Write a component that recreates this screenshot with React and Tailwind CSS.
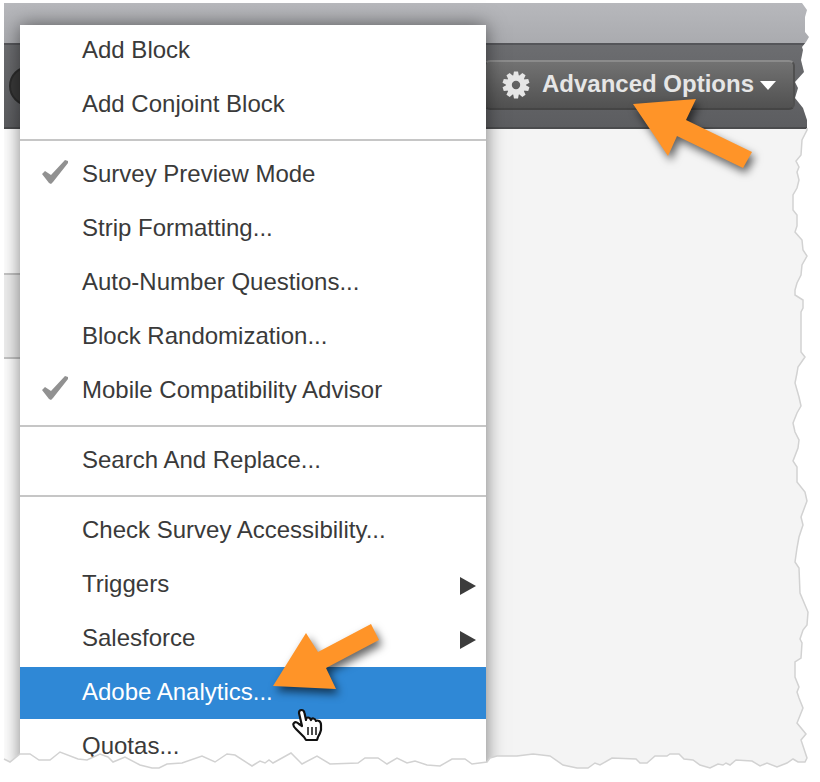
import React from "react";

const TEAR_RIGHT =
  "L807 128 L807 130 L802 140 L801 155 L796 161 L799 167 L797 172 L799 180 L797 188 L793 195 L793 210 L797 215 L797 226 L795 232 L802 240 L803 250 L807 256 L802 265 L801 275 L797 283 L795 290 L795 295 L803 300 L803 308 L801 312 L801 352 L805 357 L798 367 L797 373 L795 383 L799 397 L801 406 L797 413 L793 423 L795 432 L799 440 L798 448 L793 461 L797 467 L797 482 L805 492 L807 501 L801 517 L803 525 L799 537 L797 548 L795 562 L799 568 L800 593 L808 612 L807 625 L803 630 L800 639 L802 643 L801 658 L795 662 L795 677 L799 687 L797 692 L799 698 L803 708 L797 723 L806 734 L801 740 L807 758 L805 762";
const TEAR_BOTTOM =
  "L798 762 L793 759 L787 763 L777 767 L767 763 L760 766 L752 761 L736 760 L730 765 L726 763 L723 765 L718 764 L710 768 L700 765 L693 760 L684 759 L679 754 L670 754 L667 756 L655 756 L647 763 L640 763 L636 759 L612 758 L600 765 L595 763 L588 768 L577 768 L563 765 L550 756 L533 754 L517 756 L497 756 L490 758 L487 762 L472 764 L465 759 L452 759 L440 766 L427 765 L415 761 L407 763 L397 758 L387 764 L378 758 L365 758 L358 763 L330 764 L317 756 L302 764 L291 753 L273 763 L269 760 L265 763 L260 761 L252 766 L235 755 L227 754 L215 762 L202 756 L182 763 L167 764 L159 768 L152 768 L140 765 L125 757 L113 762 L108 757 L100 754 L87 760 L78 759 L60 752 L50 760 L39 760 L30 754 L20 754 L10 762 L4 759";

function TornEdge() {
  return (
    <svg
      className="pointer-events-none absolute inset-0 z-20 h-full w-full"
      viewBox="0 0 820 782"
      preserveAspectRatio="none"
      aria-hidden="true"
    >
      <path
        fill="#fff"
        d={
          "M820 0 L802 0 L802 3 L807 10 L805 17 L805 32 L809 37 L806 42 L802 47 L803 50 L801 60 L804 72 L795 82 L798 88 L795 98 L803 108 L807 120 " +
          TEAR_RIGHT +
          TEAR_BOTTOM +
          " L0 759 L0 782 L820 782 Z"
        }
      />
      <path fill="#fff" d="M0 0 H4 V782 H0 Z" />
      <path
        fill="none"
        stroke="#d2d2d2"
        strokeWidth="1.5"
        d={"M807 128 " + TEAR_RIGHT + TEAR_BOTTOM}
      />
    </svg>
  );
}

function Gear() {
  const teeth = [0, 36, 72, 108, 144, 180, 216, 252, 288, 324];
  return (
    <svg className="h-7 w-7" viewBox="0 0 28 28" aria-hidden="true">
      <g fill="#e6e6e6">
        {teeth.map((a) => (
          <path key={a} d="M11 5.500 L12 0.500 H16 L17 5.500 Z" transform={`rotate(${a} 14 14)`} />
        ))}
        <path
          fillRule="evenodd"
          d="M14 4 A10 10 0 1 1 14 24 A10 10 0 1 1 14 4 Z M14 9.800 A4.200 4.200 0 1 0 14 18.200 A4.200 4.200 0 1 0 14 9.800 Z"
        />
      </g>
    </svg>
  );
}

function Check() {
  return (
    <svg className="h-6 w-[26px]" viewBox="0 0 26 24" aria-hidden="true">
      <path d="M0 14 L3 11 L9 15 L23 0 L26 1 L26 3 L11 22 L9 24 L7 23 Z" fill="#919191" />
    </svg>
  );
}

function Hand() {
  return (
    <svg className="absolute top-[41px] left-[271px] z-10 h-9 w-8" viewBox="0 0 32 36" aria-hidden="true">
      <path
        d="M8 5 Q8 2 10.500 2 Q13 2 13.500 5 L15 12 Q15 9.500 17 9.500 Q19 9.500 20 12 Q20.500 10 22.500 10.500 Q24.500 11 25 13 Q26 12 28 13 Q30 14 30 17 L30 22 Q29 26 27 29 L26 32 H15 L13 29 L5 21 Q1 17 3 15 Q5 13 8 16 L11 18 Z"
        fill="#fff"
        stroke="#111"
        strokeWidth="2.200"
        strokeLinejoin="round"
      />
      <path d="M17 19 V27 M21 19 V27 M25 19 V27" stroke="#111" strokeWidth="1.500" />
    </svg>
  );
}

const groups = [
  [{ label: "Add Block" }, { label: "Add Conjoint Block" }],
  [
    { label: "Survey Preview Mode", checked: true },
    { label: "Strip Formatting..." },
    { label: "Auto-Number Questions..." },
    { label: "Block Randomization..." },
    { label: "Mobile Compatibility Advisor", checked: true },
  ],
  [{ label: "Search And Replace..." }],
  [
    { label: "Check Survey Accessibility..." },
    { label: "Triggers", submenu: true },
    { label: "Salesforce", submenu: true },
    { label: "Adobe Analytics...", active: true },
    { label: "Quotas..." },
  ],
];

function MenuItem({ label, checked, submenu, active }) {
  return (
    <li className="relative" role="none">
      <button
        type="button"
        role={checked ? "menuitemcheckbox" : "menuitem"}
        aria-checked={checked ? true : undefined}
        aria-haspopup={submenu ? "menu" : undefined}
        className={
          "flex h-[52px] w-full items-center pr-2.5 text-left " +
          (active ? "bg-[#2f88d6] text-white" : "text-[#3a3a3a]")
        }
      >
        <span className="flex w-[62px] shrink-0 pb-1.5 pl-[22px]">{checked && <Check />}</span>
        <span className="flex-1 pb-0.5 whitespace-nowrap">{label}</span>
        {submenu && (
          <svg className="mt-0.5 h-[18px] w-4" viewBox="0 0 16 18" aria-hidden="true">
            <path d="M0 0 L16 9 L0 18 Z" fill="#3c3c3c" />
          </svg>
        )}
      </button>
      {active && (
        <>
          <svg
            className="pointer-events-none absolute -top-11 left-[253px] z-10 h-[68px] w-[108px] overflow-visible drop-shadow-[3px_5px_4px_rgba(0,0,0,0.6)]"
            viewBox="0 0 108 68"
            aria-hidden="true"
          >
            <path d="M0 63 L33 10 L45 29 L98 1 L106 17 L53 45 L63 66 Z" fill="#ff9428" />
          </svg>
          <Hand />
        </>
      )}
    </li>
  );
}

export default function App() {
  return (
    <div className="relative flex min-h-screen flex-col overflow-hidden bg-white pt-[3px] pl-1 font-['Liberation_Sans',Arial,sans-serif] text-2xl">
      <div className="h-10 bg-linear-to-b from-[#b7b8bc] to-[#aaabaf]" />
      <header className="relative flex h-[86px] items-center justify-end border-y-2 border-t-[#55565a] border-b-[#4a4b4d] bg-linear-to-b from-[#6c6d70] to-[#5c5d60] pr-[25px] pb-0.5">
        <div className="absolute top-[21px] left-[5px] h-10 w-10 rounded-full border-2 border-[#2c2c2c] bg-[#3a3a3a]" />
        <div className="relative">
          <button
            type="button"
            aria-haspopup="menu"
            aria-expanded="true"
            className="flex h-[50px] items-center rounded-md border-2 border-t-[#8b8b8b] border-r-[#505050] border-b-[#454545] border-l-[#505050] bg-linear-to-b from-[#727272] to-[#515151] pr-[17px] pl-4 font-bold text-[#e6e6e6]"
          >
            <Gear />
            <span className="ml-3 pb-0.5 whitespace-nowrap">Advanced Options</span>
            <svg className="ml-1.5 h-[9px] w-4" viewBox="0 0 16 9" aria-hidden="true">
              <path d="M0 0 H16 L8 9 Z" fill="#fff" />
            </svg>
          </button>
          <svg
            className="pointer-events-none absolute top-[39px] right-[41px] z-10 h-[72px] w-[121px] overflow-visible drop-shadow-[3px_5px_4px_rgba(0,0,0,0.6)]"
            viewBox="0 0 121 72"
            aria-hidden="true"
          >
            <path d="M0 5 L63 0 L53 21 L119 53 L110 69 L44 37 L35 57 Z" fill="#ff9428" />
          </svg>
        </div>
      </header>
      <main className="flex flex-1">
        <div className="w-10 shrink-0 bg-white pt-36">
          <div className="h-[86px] border-y-2 border-[#c4c4c4] bg-[#efefef]" />
        </div>
        <div className="flex-1 bg-[#f4f4f4]" />
      </main>
      <ul
        role="menu"
        aria-label="Advanced Options"
        className="absolute top-[25px] left-5 flex w-[466px] flex-col gap-0.5 bg-white shadow-[0_0_18px_rgba(0,0,0,0.5)]"
      >
        {groups.map((items, i) => (
          <React.Fragment key={i}>
            {i > 0 && <li role="separator" className="my-1.5 h-0.5 bg-[#c6c6c6]" />}
            {items.map((item) => (
              <MenuItem key={item.label} {...item} />
            ))}
          </React.Fragment>
        ))}
      </ul>
      <TornEdge />
    </div>
  );
}
